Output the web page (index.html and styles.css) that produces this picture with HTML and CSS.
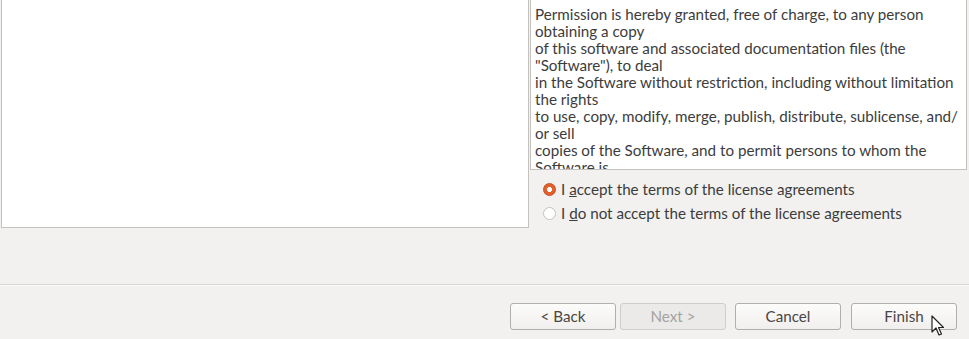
FILE: index.html
```html
<!DOCTYPE html>
<html>
<head>
<meta charset="utf-8">
<link rel="stylesheet" href="styles.css">
</head>
<body>
<div class="wizard">
  <div class="content">
    <div class="left-panel"></div>
    <div class="right-col">
      <div class="license">
        <div class="line">Permission is hereby granted, free of charge, to any person</div>
        <div class="line">obtaining a copy</div>
        <div class="line">of this software and associated documentation files (the</div>
        <div class="line">"Software"), to deal</div>
        <div class="line">in the Software without restriction, including without limitation</div>
        <div class="line">the rights</div>
        <div class="line">to use, copy, modify, merge, publish, distribute, sublicense, and/</div>
        <div class="line">or sell</div>
        <div class="line">copies of the Software, and to permit persons to whom the</div>
        <div class="line">Software is</div>
      </div>
      <div class="radios">
        <label class="radio-row"><span class="radio checked"></span><span>I <u>a</u>ccept the terms of the license agreements</span></label>
        <label class="radio-row"><span class="radio"></span><span>I <u>d</u>o not accept the terms of the license agreements</span></label>
      </div>
    </div>
  </div>
  <div class="separator"></div>
  <div class="buttons">
    <button class="btn">&lt; Back</button>
    <button class="btn disabled">Next &gt;</button>
    <button class="btn cancel">Cancel</button>
    <button class="btn finish">Finish</button>
  </div>
  <svg class="cursor" width="14" height="22" viewBox="0 0 14 22">
    <path d="M1 1 L1 17 L5 13 L8 20 L10.5 19 L7.5 12.5 L12.5 12.5 Z" fill="#ffffff" stroke="#222222" stroke-width="1.2" stroke-linejoin="round"/>
  </svg>
</div>
</body>
</html>
```

FILE: styles.css
```css
html, body {
  margin: 0;
  padding: 0;
  background: #f2f1f0;
}
body {
  font-family: "Lato", "Open Sans", sans-serif;
  font-size: 15.2px;
  color: #3c3c3c;
  width: 969px;
  height: 339px;
  overflow: hidden;
}
.wizard {
  position: relative;
  width: 969px;
  height: 339px;
}
.content {
  display: flex;
  height: 228px;
}
.left-panel {
  margin-left: 1px;
  width: 528px;
  height: 228px;
  box-sizing: border-box;
  background: #ffffff;
  border: 1px solid #c4c2be;
  border-top: none;
}
.right-col {
  margin-left: 1px;
  display: flex;
  flex-direction: column;
}
.license {
  width: 437px;
  height: 170px;
  box-sizing: border-box;
  background: #ffffff;
  border: 1px solid #c4c2be;
  border-top: none;
  padding: 6px 0 0 4px;
  overflow: hidden;
  line-height: 17px;
}
.line {
  white-space: nowrap;
}
.radios {
  display: flex;
  flex-direction: column;
  gap: 8px;
  padding: 11px 0 0 13px;
}
.radio-row {
  display: flex;
  align-items: center;
  gap: 5px;
  height: 16px;
  line-height: 16px;
}
.radio {
  width: 11px;
  height: 11px;
  border-radius: 50%;
  border: 1px solid #c4c2be;
  background: #ffffff;
  box-sizing: content-box;
}
.radio.checked {
  border-color: #c7491c;
  background: radial-gradient(circle, #ffffff 0 2.2px, #e3602b 2.8px);
}
.separator {
  margin-top: 56px;
  height: 1px;
  background: #d9d7d3;
  border-bottom: 1px solid #fbfbfa;
}
.buttons {
  display: flex;
  justify-content: flex-end;
  padding: 17px 12px 0 0;
}
.btn {
  width: 106px;
  height: 27px;
  box-sizing: border-box;
  border: 1px solid #b1afab;
  border-radius: 3px;
  background: linear-gradient(#fcfcfb, #f0efed);
  font-family: "Lato", "Open Sans", sans-serif;
  font-size: 15.2px;
  color: #4a4643;
  padding: 0 0 2px 0;
  margin-left: 4px;
}
.btn.disabled {
  background: #ebeae8;
  border-color: #d0ceca;
  color: #a4a3a0;
}
.btn.cancel {
  margin-left: 9px;
}
.btn.finish {
  margin-left: 10px;
}
.cursor {
  position: absolute;
  left: 931px;
  top: 315px;
}
```
